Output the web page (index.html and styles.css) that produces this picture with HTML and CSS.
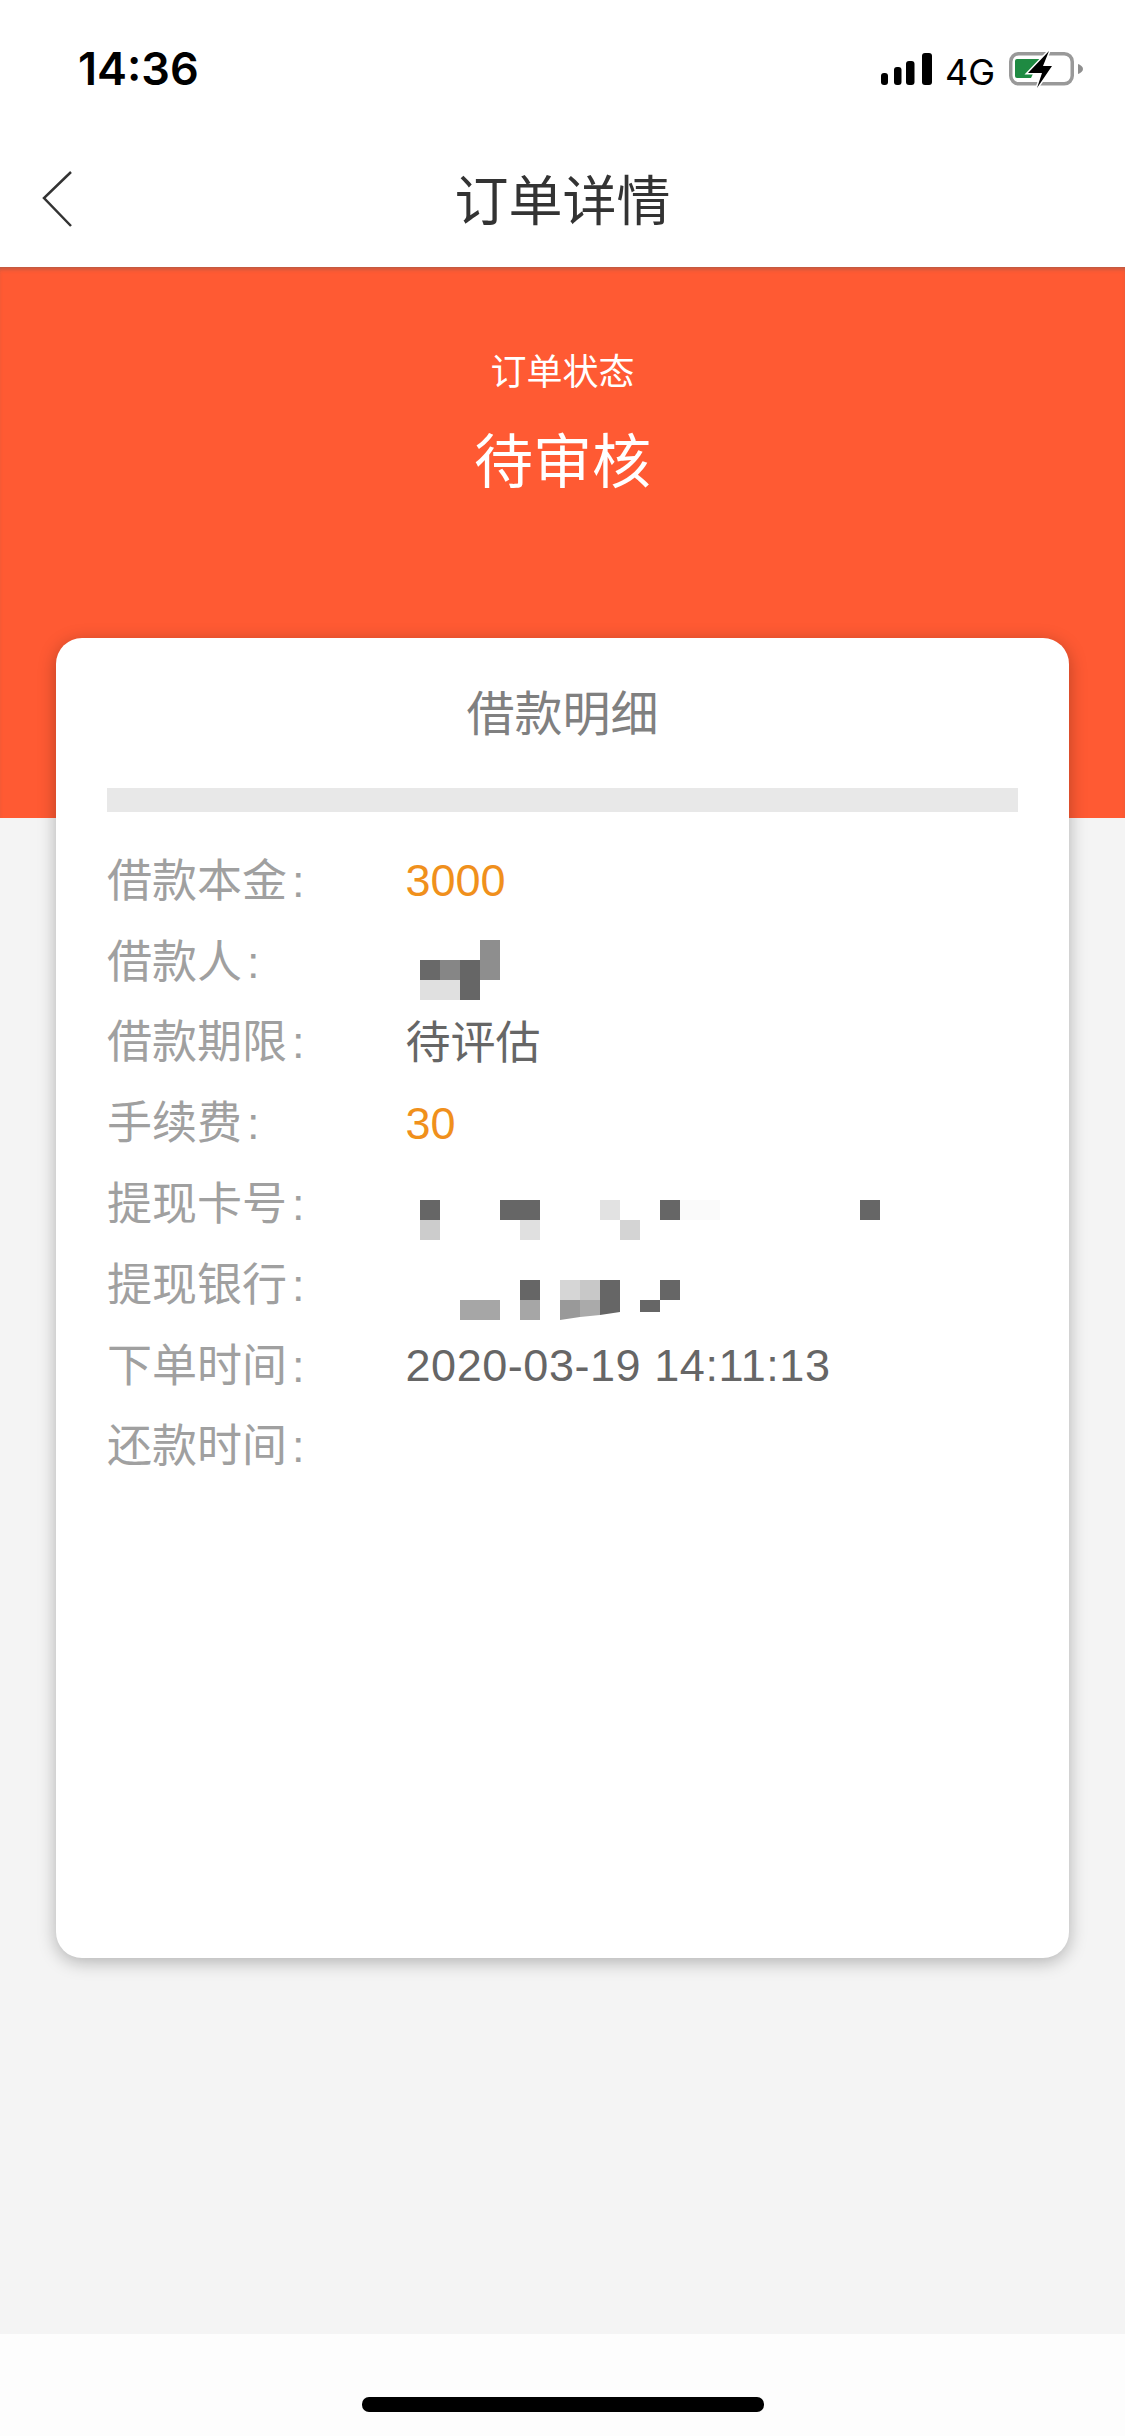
FILE: index.html
```html
<!DOCTYPE html>
<html lang="zh-CN">
<head>
  <meta charset="UTF-8">
  <meta name="viewport" content="width=device-width, initial-scale=1.0">
  <title>订单详情</title>
  <link rel="stylesheet" href="styles.css">
</head>
<body>
  <div class="status-bar">
    <span class="clock">14:36</span>
    <div class="status-icons">
      <svg class="signal" width="54" height="34" viewBox="0 0 54 34">
        <rect x="3" y="20" width="7" height="12" rx="3" />
        <rect x="16" y="14" width="7.5" height="18" rx="3" />
        <rect x="28" y="8" width="8.5" height="24" rx="3" />
        <rect x="44" y="0" width="10" height="32" rx="3" />
      </svg>
      <span class="network">4G</span>
      <svg class="battery" width="74" height="36" viewBox="0 0 74 36">
        <rect x="1.75" y="1.75" width="61.5" height="30" rx="8" fill="none" stroke="#999" stroke-width="3.5" />
        <path d="M69 12c2.500 1 5 2.500 5 5s-2.500 4-5 5z" fill="#8e8e8e" />
        <path d="M8 7h23l-9 19H8a2 2 0 0 1-2-2V9a2 2 0 0 1 2-2z" fill="#1f8a42" />
        <path d="M40 -1 19 21h14l-5 15 15-22h-9z" fill="#000" stroke="#fff" stroke-width="3" paint-order="stroke" />
      </svg>
    </div>
  </div>

  <header class="nav-bar">
    <svg class="back" width="30" height="56" viewBox="0 0 30 56">
      <polyline points="29,1 2,27 29,55" fill="none" stroke="#333" stroke-width="2.5" />
    </svg>
    <h1 class="nav-title">订单详情</h1>
  </header>

  <main class="page">
    <section class="hero">
      <div class="hero-label">订单状态</div>
      <div class="hero-status">待审核</div>
    </section>

    <section class="card">
      <h2 class="card-title">借款明细</h2>
      <div class="divider"></div>
      <div class="detail-list">
        <div class="row">
          <span class="label">借款本金<i>:</i></span>
          <span class="value amount">3000</span>
        </div>
        <div class="row">
          <span class="label">借款人<i>:</i></span>
          <svg class="mosaic" width="100" height="60" viewBox="0 0 100 60">
            <rect x="60" y="0" width="20" height="40" fill="#8e8e8e" />
            <rect x="0" y="20" width="20" height="20" fill="#696969" />
            <rect x="20" y="20" width="20" height="20" fill="#868686" />
            <rect x="40" y="20" width="20" height="40" fill="#666" />
            <rect x="0" y="40" width="40" height="20" fill="#e0e0e0" />
          </svg>
        </div>
        <div class="row">
          <span class="label">借款期限<i>:</i></span>
          <span class="value value-text">待评估</span>
        </div>
        <div class="row">
          <span class="label">手续费<i>:</i></span>
          <span class="value amount">30</span>
        </div>
        <div class="row">
          <span class="label">提现卡号<i>:</i></span>
          <svg class="mosaic mosaic-low" width="480" height="40" viewBox="0 0 480 40">
            <rect x="0" y="0" width="20" height="20" fill="#666" />
            <rect x="0" y="20" width="20" height="20" fill="#ccc" />
            <rect x="80" y="0" width="40" height="20" fill="#666" />
            <rect x="100" y="20" width="20" height="20" fill="#e0e0e0" />
            <rect x="180" y="0" width="20" height="20" fill="#e2e2e2" />
            <rect x="200" y="20" width="20" height="20" fill="#d4d4d4" />
            <rect x="240" y="0" width="20" height="20" fill="#666" />
            <rect x="260" y="0" width="40" height="20" fill="#fafafa" />
            <rect x="440" y="0" width="20" height="20" fill="#666" />
          </svg>
        </div>
        <div class="row">
          <span class="label">提现银行<i>:</i></span>
          <svg class="mosaic mosaic-low" width="480" height="40" viewBox="0 0 480 40">
            <rect x="40" y="20" width="40" height="20" fill="#a6a6a6" />
            <rect x="100" y="0" width="20" height="20" fill="#666" />
            <rect x="100" y="20" width="20" height="20" fill="#a6a6a6" />
            <rect x="140" y="0" width="20" height="20" fill="#d6d6d6" />
            <rect x="160" y="0" width="20" height="20" fill="#c8c8c8" />
            <rect x="180" y="0" width="20" height="20" fill="#666" />
            <polygon points="140,20 160,20 160,37 140,40" fill="#999" />
            <polygon points="160,20 180,20 180,35 160,37" fill="#aaa" />
            <polygon points="180,20 200,20 200,32 180,35" fill="#666" />
            <rect x="220" y="20" width="20" height="12" fill="#666" />
            <rect x="240" y="0" width="20" height="20" fill="#666" />
          </svg>
        </div>
        <div class="row">
          <span class="label">下单时间<i>:</i></span>
          <span class="value date">2020-03-19 14:11:13</span>
        </div>
        <div class="row">
          <span class="label">还款时间<i>:</i></span>
        </div>
      </div>
    </section>
  </main>

  <div class="home-area">
    <div class="home-indicator"></div>
  </div>
</body>
</html>
```

FILE: styles.css
```css
* {
  box-sizing: border-box;
}
html, body {
  margin: 0;
  padding: 0;
}
body {
  width: 1125px;
  height: 2436px;
  display: flex;
  flex-direction: column;
  font-family: "Liberation Sans", "Noto Sans CJK SC", sans-serif;
  background-color: #fff;
  overflow: hidden;
}

/* status bar */
.status-bar {
  height: 133px;
  padding: 44px 42px 0 78px;
  display: flex;
  justify-content: space-between;
  align-items: flex-start;
}
.clock {
  font-family: Inter, sans-serif;
  font-size: 45px;
  line-height: 50px;
  font-weight: 600;
  color: #000;
}
.status-icons {
  display: flex;
  align-items: flex-start;
  padding-top: 8px;
}
.signal {
  margin-top: 1px;
  fill: #000;
  overflow: visible;
}
.network {
  margin-left: 13px;
  font-family: Inter, sans-serif;
  font-size: 36px;
  line-height: 40px;
  color: #000;
  width: 62px;
}
.battery {
  margin-left: 2px;
  overflow: visible;
}

/* nav */
.nav-bar {
  height: 134px;
  position: relative;
  display: flex;
  align-items: center;
  justify-content: center;
}
.back {
  position: absolute;
  left: 42px;
  top: 38px;
}
.nav-title {
  margin: 0 0 6px;
  font-size: 54px;
  font-weight: 400;
  color: #333;
}

/* page body */
.page {
  flex: 1;
  background-color: #f4f4f4;
}
.hero {
  height: 551px;
  padding-top: 78px;
  background-color: #ff5a33;
  box-shadow: inset 0 4px 4px -2px rgba(90, 90, 90, 0.45);
  text-align: center;
  color: #fff;
}
.hero-label {
  font-size: 36px;
  line-height: 56px;
}
.hero-status {
  margin-top: 27px;
  font-size: 59px;
  line-height: 70px;
}

/* card */
.card {
  height: 1320px;
  margin: -180px 56px 0;
  padding: 0 51px;
  background-color: #fff;
  border-radius: 26px;
  box-shadow: 0 4px 18px rgba(0, 0, 0, 0.28);
  position: relative;
}
.card-title {
  margin: 0;
  padding-top: 45px;
  height: 150px;
  font-size: 48px;
  line-height: 64px;
  font-weight: 400;
  text-align: center;
  color: #808080;
}
.divider {
  height: 24px;
  background-color: #e8e8e8;
}
.detail-list {
  padding-top: 28px;
}
.row {
  height: 80.8px;
  display: flex;
  align-items: center;
}
.label {
  width: 298.5px;
  flex-shrink: 0;
  margin-bottom: 6px;
  font-size: 45px;
  color: #a0a0a0;
}
.label i {
  font-style: normal;
  margin-left: 5px;
}
.value {
  margin-top: 2px;
  font-size: 45px;
  color: #666;
}
.value-text {
  margin: 0 0 4px;
}
.date {
  letter-spacing: 0.55px;
}
.amount {
  color: #f0901c;
}
.mosaic {
  display: block;
  align-self: flex-start;
  margin: 19px 0 0 14.5px;
}
.mosaic-low {
  margin-top: 36.5px;
}

/* home indicator */
.home-area {
  height: 102px;
  padding-top: 63px;
  background-color: #fdfdfd;
}
.home-indicator {
  width: 402px;
  height: 15px;
  margin: 0 auto;
  background-color: #000;
  border-radius: 7px;
}
```
